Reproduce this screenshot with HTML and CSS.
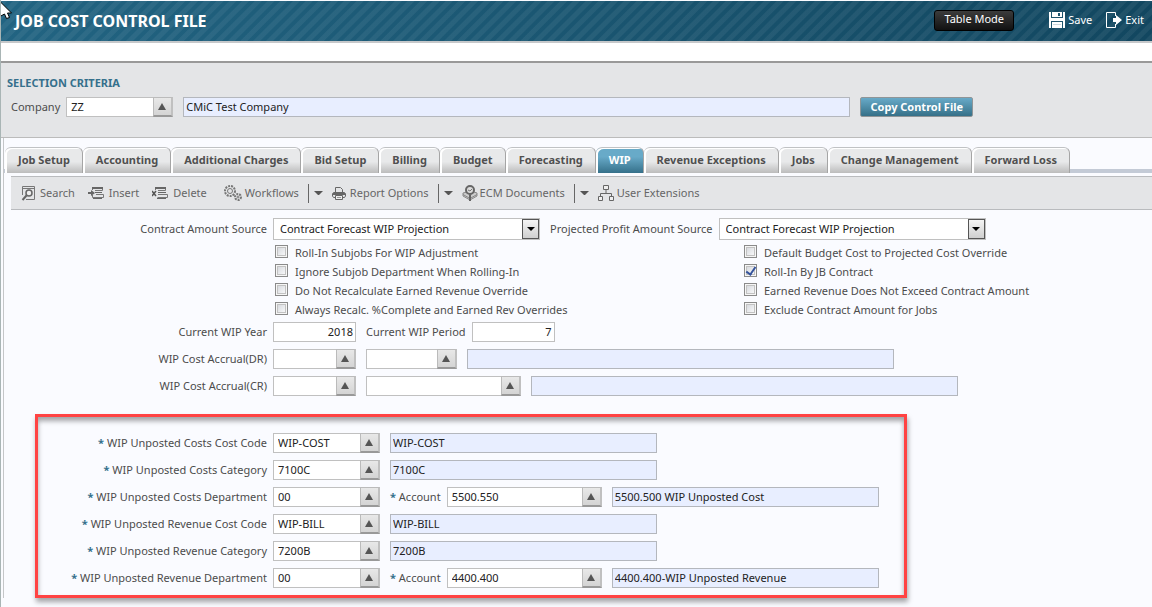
FILE: index.html
```html
<!DOCTYPE html>
<html lang="en">
<head>
    <meta charset="UTF-8">
    <meta name="viewport" content="width=device-width, initial-scale=1.0">
    <title>Job Cost Control File</title>
    <link rel="stylesheet" href="styles.css">
</head>
<body>
    <header class="header">
        <h1>JOB COST CONTROL FILE</h1>
        <button class="table-mode" type="button">Table Mode</button>
        <button class="header-btn" type="button">
            <svg width="16" height="16" viewBox="0 0 16 16"><path fill="#fff" d="M0 0h16v16H0z"/><path fill="#1d546d" d="M2 0h1v5h10V0h1v6H2zM9 1h2v3H9zM2 9h12v7h-1v-6H3v6H2z"/><path fill="#c9d6dc" d="M4 12h8v1H4z"/></svg>
            Save
        </button>
        <button class="header-btn" type="button">
            <svg width="16" height="16" viewBox="0 0 16 16"><path fill="none" stroke="#fff" d="M9.500 4V.5h-9v15h9V12"/><path fill="#fff" d="M7 6h3V3l6 5-6 5v-3H7z"/></svg>
            Exit
        </button>
    </header>
    <div class="message-bar"></div>

    <section class="selection">
        <h2>SELECTION CRITERIA</h2>
        <div class="selection-row">
            <label for="company">Company</label>
            <span class="lov lov-md"><input type="text" id="company" value="ZZ"><button type="button" aria-label="Company list"><i></i></button></span>
            <input class="display company-name" type="text" value="CMiC Test Company" aria-label="Company name" readonly>
            <button class="copy-btn" type="button">Copy Control File</button>
        </div>
    </section>

    <main class="content">
        <nav class="tabs">
            <a href="#">Job Setup</a>
            <a href="#">Accounting</a>
            <a href="#">Additional Charges</a>
            <a href="#">Bid Setup</a>
            <a href="#">Billing</a>
            <a href="#">Budget</a>
            <a href="#">Forecasting</a>
            <a href="#" class="active">WIP</a>
            <a href="#">Revenue Exceptions</a>
            <a href="#">Jobs</a>
            <a href="#">Change Management</a>
            <a href="#">Forward Loss</a>
        </nav>

        <div class="toolbar">
            <button class="tool" type="button">
                <svg width="16" height="16" viewBox="0 0 16 16"><path fill="none" stroke="#777" d="M1.500 10V1.500h12v13H5M1 3.500h13"/><circle cx="8" cy="8" r="3" fill="#eee" stroke="#666" stroke-width="1.500"/><path stroke="#666" stroke-width="2" d="M5.500 10.500L1.500 15"/></svg>
                Search
            </button>
            <button class="tool tool-wide" type="button">
                <svg width="16" height="16" viewBox="0 0 16 16"><path fill="none" stroke="#777" d="M4.500 5V2.500h10v3H7M8 9.500h7.500v3h-11V10"/><path fill="#666" d="M4 2h11v2H4zM0 7h3V5l4 3-4 3V9H0zM7 7h7v1H7zM5 13h9v1H5z"/></svg>
                Insert
            </button>
            <button class="tool tool-wide" type="button">
                <svg width="16" height="16" viewBox="0 0 16 16"><path fill="none" stroke="#777" d="M3.500 5V2.500h10v3H6M6 9.500h9.500v3h-10"/><path fill="#666" d="M3 2h11v2H3zM6 7h8v1H6zM5 13h9v1H5z"/><path stroke="#555" stroke-width="1.500" d="M0 6l4 5M4 6l-4 5"/></svg>
                Delete
            </button>
            <button class="tool tool-flow" type="button">
                <svg width="18" height="16" viewBox="0 0 18 16"><g fill="none" stroke="#777"><circle cx="6" cy="6" r="5" stroke-width="2" stroke-dasharray="2 1"/><circle cx="6" cy="6" r="2.500"/><circle cx="14" cy="12" r="3" stroke-width="2" stroke-dasharray="2 1"/><circle cx="14" cy="12" r="1"/></g></svg>
                Workflows
            </button>
            <button class="drop" type="button" aria-label="Workflows menu"><i></i></button>
            <button class="tool tool-report" type="button">
                <svg width="14" height="16" viewBox="0 0 14 16"><path fill="none" stroke="#666" d="M3.500 7V2.500h5l2 2V7M3 12.500H1.500L.5 11V8.500l1-1h11l1 1V11l-1 1.500H11"/><path fill="#666" d="M1 8h12v2H1z"/><path fill="#eee" stroke="#666" d="M3.500 10.500h7v4h-7z"/><path stroke="#999" d="M5 12.500h4"/></svg>
                Report Options
            </button>
            <button class="drop" type="button" aria-label="Report Options menu"><i></i></button>
            <button class="tool tool-ecm" type="button">
                <svg width="16" height="16" viewBox="0 0 16 16"><path fill="#ccc" stroke="#888" d="M1 8l4-1 3 3 4-3 3 1v3l-7 4-7-4z"/><path fill="none" stroke="#888" d="M1 9.500l7 4 7-4"/><circle cx="8" cy="5" r="4" fill="#ddd" stroke="#666" stroke-width="2"/><path fill="none" stroke="#777" d="M6 5l2 1 2-2"/><path fill="#666" d="M7 10h2v6H7z"/></svg>
                ECM Documents
            </button>
            <button class="drop" type="button" aria-label="ECM Documents menu"><i></i></button>
            <button class="tool" type="button">
                <svg width="16" height="16" viewBox="0 0 16 16"><g fill="#eee" stroke="#666"><path d="M5.500.5h5v4h-5zM.5 11.500h4v4h-4zM11.500 11.500h4v4h-4z"/><path fill="none" d="M8 5v3.500M2.500 11V8.500h11V11"/></g></svg>
                User Extensions
            </button>
        </div>

        <form class="form">
            <div class="row">
                <label class="lead" for="contractSource">Contract Amount Source</label>
                <span class="select">
                    <select id="contractSource"><option>Contract Forecast WIP Projection</option></select>
                    <span class="select-arrow"><i></i></span>
                </span>
                <label for="profitSource">Projected Profit Amount Source</label>
                <span class="select">
                    <select id="profitSource"><option>Contract Forecast WIP Projection</option></select>
                    <span class="select-arrow"><i></i></span>
                </span>
            </div>
            <div class="checks">
                <label><input type="checkbox">Roll-In Subjobs For WIP Adjustment</label>
                <label><input type="checkbox">Default Budget Cost to Projected Cost Override</label>
                <label><input type="checkbox">Ignore Subjob Department When Rolling-In</label>
                <label><input type="checkbox" checked>Roll-In By JB Contract</label>
                <label><input type="checkbox">Do Not Recalculate Earned Revenue Override</label>
                <label><input type="checkbox">Earned Revenue Does Not Exceed Contract Amount</label>
                <label><input type="checkbox">Always Recalc. %Complete and Earned Rev Overrides</label>
                <label><input type="checkbox">Exclude Contract Amount for Jobs</label>
            </div>
            <div class="rows">
                <div class="row">
                    <label class="lead" for="wipYear">Current WIP Year</label>
                    <input class="number" type="text" id="wipYear" value="2018">
                    <label for="wipPeriod">Current WIP Period</label>
                    <input class="number" type="text" id="wipPeriod" value="7">
                </div>
                <div class="row">
                    <label class="lead" for="accrualDr">WIP Cost Accrual(DR)</label>
                    <span class="lov lov-xs"><input type="text" id="accrualDr"><button type="button" aria-label="DR department list"><i></i></button></span>
                    <span class="lov lov-sm"><input type="text" aria-label="DR account"><button type="button" aria-label="DR account list"><i></i></button></span>
                    <input class="display display-lg" type="text" aria-label="DR account name" readonly>
                </div>
                <div class="row">
                    <label class="lead" for="accrualCr">WIP Cost Accrual(CR)</label>
                    <span class="lov lov-xs"><input type="text" id="accrualCr"><button type="button" aria-label="CR department list"><i></i></button></span>
                    <span class="lov lov-lg"><input type="text" aria-label="CR account"><button type="button" aria-label="CR account list"><i></i></button></span>
                    <input class="display display-lg" type="text" aria-label="CR account name" readonly>
                </div>
            </div>

            <div class="rows highlight">
                <div class="row">
                    <label class="lead" for="costCode"><b>*</b> WIP Unposted Costs Cost Code</label>
                    <span class="lov lov-md"><input type="text" id="costCode" value="WIP-COST"><button type="button" aria-label="Cost code list"><i></i></button></span>
                    <input class="display" type="text" value="WIP-COST" aria-label="Cost code name" readonly>
                </div>
                <div class="row">
                    <label class="lead" for="costCategory"><b>*</b> WIP Unposted Costs Category</label>
                    <span class="lov lov-md"><input type="text" id="costCategory" value="7100C"><button type="button" aria-label="Category list"><i></i></button></span>
                    <input class="display" type="text" value="7100C" aria-label="Category name" readonly>
                </div>
                <div class="row">
                    <label class="lead" for="costDept"><b>*</b> WIP Unposted Costs Department</label>
                    <span class="lov lov-md"><input type="text" id="costDept" value="00"><button type="button" aria-label="Department list"><i></i></button></span>
                    <label for="costAccount"><b>*</b> Account</label>
                    <span class="lov lov-lg"><input type="text" id="costAccount" value="5500.550"><button type="button" aria-label="Account list"><i></i></button></span>
                    <input class="display" type="text" value="5500.500 WIP Unposted Cost" aria-label="Account name" readonly>
                </div>
                <div class="row">
                    <label class="lead" for="revCode"><b>*</b> WIP Unposted Revenue Cost Code</label>
                    <span class="lov lov-md"><input type="text" id="revCode" value="WIP-BILL"><button type="button" aria-label="Revenue cost code list"><i></i></button></span>
                    <input class="display" type="text" value="WIP-BILL" aria-label="Revenue cost code name" readonly>
                </div>
                <div class="row">
                    <label class="lead" for="revCategory"><b>*</b> WIP Unposted Revenue Category</label>
                    <span class="lov lov-md"><input type="text" id="revCategory" value="7200B"><button type="button" aria-label="Revenue category list"><i></i></button></span>
                    <input class="display" type="text" value="7200B" aria-label="Revenue category name" readonly>
                </div>
                <div class="row">
                    <label class="lead" for="revDept"><b>*</b> WIP Unposted Revenue Department</label>
                    <span class="lov lov-md"><input type="text" id="revDept" value="00"><button type="button" aria-label="Revenue department list"><i></i></button></span>
                    <label for="revAccount"><b>*</b> Account</label>
                    <span class="lov lov-lg"><input type="text" id="revAccount" value="4400.400"><button type="button" aria-label="Revenue account list"><i></i></button></span>
                    <input class="display" type="text" value="4400.400-WIP Unposted Revenue" aria-label="Revenue account name" readonly>
                </div>
            </div>
        </form>
    </main>

    <div class="splitter"></div>
    <svg class="cursor" width="13" height="19" viewBox="0 0 13 19"><path fill="#fff" stroke="#000" d="M-1 .5L11.500 13H7.500L9.500 17.500 6.500 18.500 4.500 14 -1 17z"/></svg>
</body>
</html>
```
FILE: styles.css
```css
* {
    box-sizing: border-box;
}
body {
    font-family: 'Noto Sans', sans-serif;
    font-size: 11px;
    line-height: 16px;
    color: #4c4c4c;
    background-color: #fafbff;
    margin: 0;
    padding-top: 1px;
    border-left: 1px solid #a9b5b5;
    min-height: 100vh;
    position: relative;
    overflow-x: hidden;
}
button, input, select {
    font: inherit;
    margin: 0;
}
button {
    cursor: pointer;
}
h1, h2 {
    margin: 0;
    font-weight: bold;
}

/* header */
.header {
    display: flex;
    align-items: center;
    height: 42px;
    padding: 0 8px 2px 14px;
    border-bottom: 2px solid #c6c8ca;
    background: repeating-linear-gradient(135deg, rgba(255, 255, 255, 0.06) 0 4px, transparent 5px 8px, rgba(255, 255, 255, 0.06) 9px), linear-gradient(to right, #226482, #124760);
}
.header h1 {
    font-size: 16px;
    line-height: 22px;
    color: #fff;
    margin-right: auto;
    padding-top: 2px;
}
.table-mode {
    height: 21px;
    width: 80px;
    padding: 0 0 2px;
    margin-right: 35px;
    color: #fff;
    background: linear-gradient(#3c3c3c, #111);
    border: 1px solid #000;
    border-radius: 3px;
}
.header-btn {
    display: flex;
    align-items: center;
    gap: 3px;
    padding: 0;
    margin-left: 14px;
    border: 0;
    background: none;
    color: #fff;
}
.table-mode + .header-btn {
    margin-left: 0;
}
.message-bar {
    height: 20px;
    background: #fff;
    border-bottom: 2px solid #999;
}

/* selection criteria */
.selection {
    height: 75px;
    padding: 12px 10px 0 6px;
    background: #e4e5e7;
    border-bottom: 1px solid #bbb;
}
.selection h2 {
    font-size: 11px;
    color: #35708c;
}
.selection-row {
    display: flex;
    align-items: center;
    gap: 10px;
    margin-top: 6px;
    padding-left: 4px;
}
.selection-row label {
    margin-right: -4px;
}
.selection-row .company-name {
    flex: 0 1 667px;
}
.copy-btn {
    height: 20px;
    width: 113px;
    padding: 0;
    font-weight: bold;
    color: #fff;
    background: linear-gradient(#68aac8, #357088);
    border: 1px solid #8f9598;
    border-radius: 2px;
}

/* tabs */
.content {
    margin-left: 2px;
    padding-top: 9px;
    border-left: 1px solid #c4c6c8;
}
.tabs {
    display: flex;
    height: 26px;
    padding-left: 1px;
    background: linear-gradient(#c3cad6, #c3cad6) bottom / 100% 4px no-repeat;
}
.tabs a {
    padding: 4px 12px 0 13px;
    font-weight: bold;
    color: #505050;
    text-decoration: none;
    white-space: nowrap;
    background: linear-gradient(#e8e9ea 55%, #bcbcbc);
    border: 1px solid #c0c2c4;
    border-width: 1px 1px 0 0;
    border-right-color: #a5a5a5;
    border-radius: 6px 6px 0 0;
    box-shadow: inset 2px 1px 0 #fff;
}
.tabs .active {
    color: #fff;
    background: linear-gradient(#68aac8 35%, #35708a);
}

/* toolbar */
.toolbar {
    display: flex;
    align-items: center;
    height: 34px;
    margin: 3px 0 0 7px;
    padding-left: 10px;
    background: #e4e5e7;
    border: 1px solid #b9bbbe;
    border-width: 1px 0;
}
.tool {
    display: flex;
    align-items: center;
    gap: 3px;
    padding: 0;
    border: 0;
    background: none;
    color: #666;
    white-space: nowrap;
}
.tool-wide {
    gap: 5px;
    margin-left: 13px;
}
.tool-flow {
    margin-left: 17px;
}
.tool-report {
    gap: 4px;
}
.tool-ecm {
    gap: 2px;
}
.drop {
    width: 15px;
    height: 19px;
    margin: 0 9px;
    padding: 0 0 0 5px;
    border: 0;
    border-left: 1px solid #666;
    background: none;
}
.drop i, .select-arrow i {
    display: block;
    border: 4px solid transparent;
    border-top: 4px solid #555;
    border-bottom: 0;
}

/* form */
.form {
    padding-top: 8px;
}
.row {
    display: flex;
    align-items: center;
    gap: 10px;
}
.row label {
    margin-right: -4px;
    white-space: nowrap;
}
.row .lead {
    width: 263px;
    text-align: right;
}
.row b {
    color: #35708c;
}
.rows {
    display: flex;
    flex-direction: column;
    gap: 7px;
}
input[type="text"] {
    height: 20px;
    padding: 0 4px 2px;
    color: #222;
    background: #fff;
    border: 1px solid #c0c0c0;
    border-radius: 0;
}
input[type="text"].number {
    width: 83px;
    padding: 0 2px 2px;
    text-align: right;
}
input[type="text"].display {
    width: 267px;
    padding: 0 2px 2px;
    background: #e8eeff;
    border-color: #b4b7bd;
}
input[type="text"].display-lg {
    width: 427px;
}
.lov {
    display: flex;
}
.lov input[type="text"] {
    flex: 1;
    min-width: 0;
    border-right: 0;
}
.lov button {
    width: 20px;
    height: 20px;
    padding: 0 1px 0 0;
    background: linear-gradient(#e8e8e8, #d4d4d4);
    border: 1px solid #bbb;
    border-right: 2px solid #c0c0c0;
    border-bottom: 2px solid #999;
}
.lov i {
    display: block;
    width: 8px;
    margin: 0 auto;
    border: 4px solid transparent;
    border-top: 0;
    border-bottom: 7px solid #555;
}
.lov-xs {
    width: 83px;
}
.lov-sm {
    width: 91px;
}
.lov-md {
    width: 107px;
}
.lov-lg {
    width: 155px;
}
.select {
    display: grid;
    grid-template-columns: 1fr 18px;
    width: 267px;
    height: 22px;
}
.select select {
    grid-area: 1 / 1 / 2 / 3;
    appearance: none;
    padding: 0 6px;
    color: #222;
    background: #fff;
    border: 1px solid #c0c0c0;
    border-radius: 0;
}
.select-arrow {
    grid-area: 1 / 2;
    display: grid;
    place-items: center;
    margin: 1px 1px 1px 0;
    background: linear-gradient(#f4f4f4, #cfcfcf);
    border: 1px solid #555;
    pointer-events: none;
}
.select-arrow i {
    border-top-color: #000;
}
.checks {
    display: grid;
    grid-template-columns: 469px auto;
    grid-auto-rows: 19px;
    padding: 3px 0 3px 271px;
}
.checks label {
    display: flex;
    align-items: center;
    gap: 7px;
}
.checks input {
    appearance: none;
    width: 13px;
    height: 13px;
    margin-bottom: 3px;
    background: linear-gradient(135deg, #cfd2d8, #fff);
    border: 1px solid #8a8a8a;
    box-shadow: inset 0 0 0 1px #f6f6f6, inset 0 0 0 2px #c2c2c2;
}
.checks input:checked {
    display: grid;
    place-items: center;
}
.checks input:checked::before {
    content: '';
    width: 4px;
    height: 8px;
    border: solid #35539c;
    border-width: 0 2px 2px 0;
    transform: rotate(35deg);
}
.highlight {
    width: fit-content;
    margin: 18px 0 7px 31px;
    padding: 16px 25px 7px 0;
    border: 3px solid #ff4343;
    box-shadow: 1px 4px 5px rgba(0, 0, 0, 0.35), inset 0 4px 5px rgba(0, 0, 0, 0.35);
}
.highlight .lead {
    width: 229px;
}

/* collapsed side panel handle and pointer lie over the page edge */
.splitter {
    position: absolute;
    left: -1px;
    top: 403px;
    width: 1px;
    height: 5px;
    background: #000;
}
.cursor {
    position: absolute;
    left: -1px;
    top: 0;
}
```
